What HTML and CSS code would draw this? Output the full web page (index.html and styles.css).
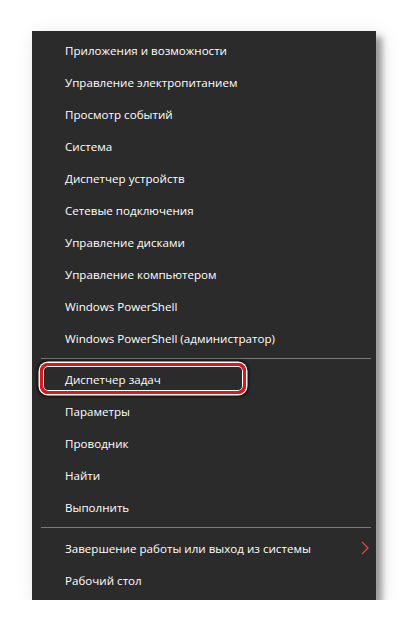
FILE: index.html
```html
<!DOCTYPE html>
<html lang="ru">
<head>
<meta charset="utf-8">
<link rel="stylesheet" href="styles.css">
</head>
<body>
<div class="page">
  <div class="menu">
    <div class="item">Приложения и возможности</div>
    <div class="item">Управление электропитанием</div>
    <div class="item">Просмотр событий</div>
    <div class="item">Система</div>
    <div class="item">Диспетчер устройств</div>
    <div class="item">Сетевые подключения</div>
    <div class="item">Управление дисками</div>
    <div class="item">Управление компьютером</div>
    <div class="item">Windows PowerShell</div>
    <div class="item">Windows PowerShell (администратор)</div>
    <div class="sep"></div>
    <div class="item highlighted">Диспетчер задач<span class="mark"></span></div>
    <div class="item">Параметры</div>
    <div class="item">Проводник</div>
    <div class="item">Найти</div>
    <div class="item">Выполнить</div>
    <div class="sep"></div>
    <div class="item sub">Завершение работы или выход из системы
      <svg class="chev" width="8" height="14" viewBox="0 0 8 14"><polyline points="1,1 7,7 1,13" fill="none" stroke="#e5473b" stroke-width="1.3"/></svg>
    </div>
    <div class="item">Рабочий стол</div>
  </div>
</div>
</body>
</html>
```
FILE: styles.css
```css
html, body {
  margin: 0;
  padding: 0;
  background: #ffffff;
}
.page {
  padding: 31px 32px 0 32px;
  width: 344px;
}
.menu {
  width: 344px;
  background: #2b2b2b;
  padding: 3px 0;
  box-sizing: border-box;
  height: 569px;
  box-shadow: 6px 6px 6px rgba(0, 0, 0, 0.34), 5px 5px 20px rgba(0, 0, 0, 0.14);
  font-family: "Open Sans", "Noto Sans", sans-serif;
  font-size: 11.6px;
  color: #ffffff;
}
.item {
  height: 32px;
  line-height: 34px;
  padding-left: 33px;
  white-space: nowrap;
  position: relative;
}
.sep {
  height: 1px;
  background: #7a7a7a;
  margin: 4px 5px 4px 9px;
}
.mark {
  position: absolute;
  left: 8px;
  top: 0;
  width: 206px;
  height: 31px;
  box-sizing: border-box;
  border: 3px solid #e3141b;
  border-radius: 8px;
  box-shadow: 0 0 0 1.5px #ffffff, inset 0 0 0 1px #ffffff, 0 0 3px 2.5px rgba(0,0,0,0.6);
}
.chev {
  position: absolute;
  right: 7px;
  top: 9px;
}
```
